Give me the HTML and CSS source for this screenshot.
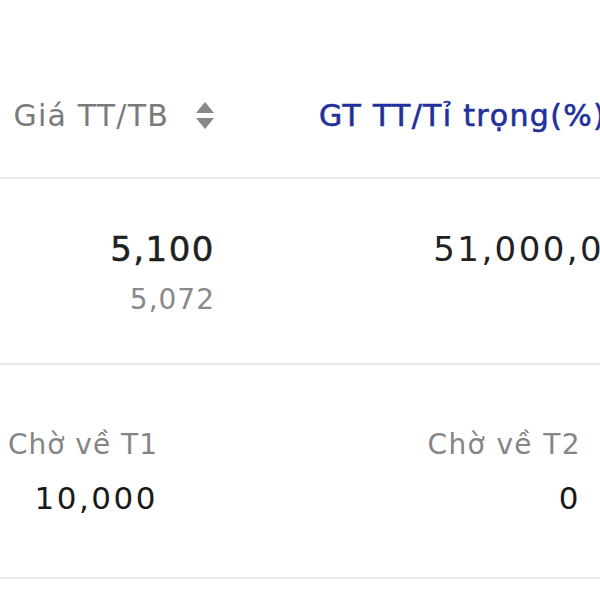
FILE: index.html
```html
<!DOCTYPE html>
<html lang="vi">
<head>
<meta charset="utf-8">
<link rel="stylesheet" href="styles.css">
</head>
<body>
<div class="page">
  <div class="row head-row">
    <div class="c1 head">
      <span class="h-label">Giá TT/TB</span>
      <svg class="sort" width="20" height="28" viewBox="0 0 20 28"><path d="M10 0 L19 11 L1 11 Z" fill="#888"/><path d="M1 16 L19 16 L10 27 Z" fill="#888"/></svg>
    </div>
    <div class="c2 head">
      <span class="h-label active">GT TT/Tỉ trọng(%)</span>
      <svg class="sort" width="20" height="28" viewBox="0 0 20 28"><path d="M10 0 L19 11 L1 11 Z" fill="#888"/><path d="M1 16 L19 16 L10 27 Z" fill="#888"/></svg>
    </div>
  </div>
  <div class="row data-row">
    <div class="c1 vals">
      <div class="v-main">5,100</div>
      <div class="v-sub">5,072</div>
    </div>
    <div class="c2 vals">
      <div class="v-main light">51,000,000</div>
    </div>
  </div>
  <div class="pending">
    <div class="p-col">
      <div class="p-label">Chờ về T1</div>
      <div class="p-val">10,000</div>
    </div>
    <div class="p-col">
      <div class="p-label">Chờ về T2</div>
      <div class="p-val">0</div>
    </div>
  </div>
</div>
</body>
</html>
```

FILE: styles.css
```css
* { box-sizing: border-box; }
html, body { margin: 0; padding: 0; background: #fff; }
body { width: 600px; height: 600px; overflow: hidden; }
.page { width: 600px; overflow: hidden; }
.row {
  display: flex;
  border-bottom: 2px solid #ebebeb;
  white-space: nowrap;
}
.c1 { width: 215px; flex: none; }
.c2 { width: 437px; flex: none; }
.head-row { height: 179px; align-items: center; }
.head {
  display: flex;
  align-items: center;
  justify-content: flex-end;
  padding-top: 54px;
}
.h-label {
  font-family: "DejaVu Sans", sans-serif;
  font-size: 30px;
  color: #7a7a7a;
  letter-spacing: 1.2px;
}
.h-label.active { color: #22309b; -webkit-text-stroke: 0.6px #22309b; letter-spacing: 1.3px; }
.sort { margin-left: 26px; display: block; }
.data-row { height: 186px; align-items: flex-start; }
.vals { display: flex; flex-direction: column; align-items: flex-end; padding-top: 50px; }
.v-main {
  font-family: "DejaVu Sans", sans-serif;
  font-size: 34px;
  color: #1f1f1f;
  line-height: 40px;
  letter-spacing: 1.5px;
  -webkit-text-stroke: 0.5px #1f1f1f;
}
.v-main.light { -webkit-text-stroke: 0; color: #222; letter-spacing: 2.4px; }
.v-sub {
  font-family: "DejaVu Sans", sans-serif;
  font-size: 28px;
  color: #8a8a8a;
  line-height: 40px;
  letter-spacing: 1px;
  margin-top: 11px;
}
.pending {
  display: flex;
  justify-content: space-between;
  height: 214px;
  padding: 60px 19px 0 8px;
  border-bottom: 2px solid #ebebeb;
}
.p-col { display: flex; flex-direction: column; align-items: flex-end; }
.p-label {
  font-family: "DejaVu Sans", sans-serif;
  font-size: 28px;
  color: #858585;
  line-height: 40px;
  letter-spacing: 1px;
}
.p-col + .p-col .p-label { letter-spacing: 1.4px; }
.p-val {
  font-family: "DejaVu Sans", sans-serif;
  font-size: 31px;
  color: #1a1a1a;
  line-height: 40px;
  letter-spacing: 2.5px;
  margin-top: 13px;
}
```
